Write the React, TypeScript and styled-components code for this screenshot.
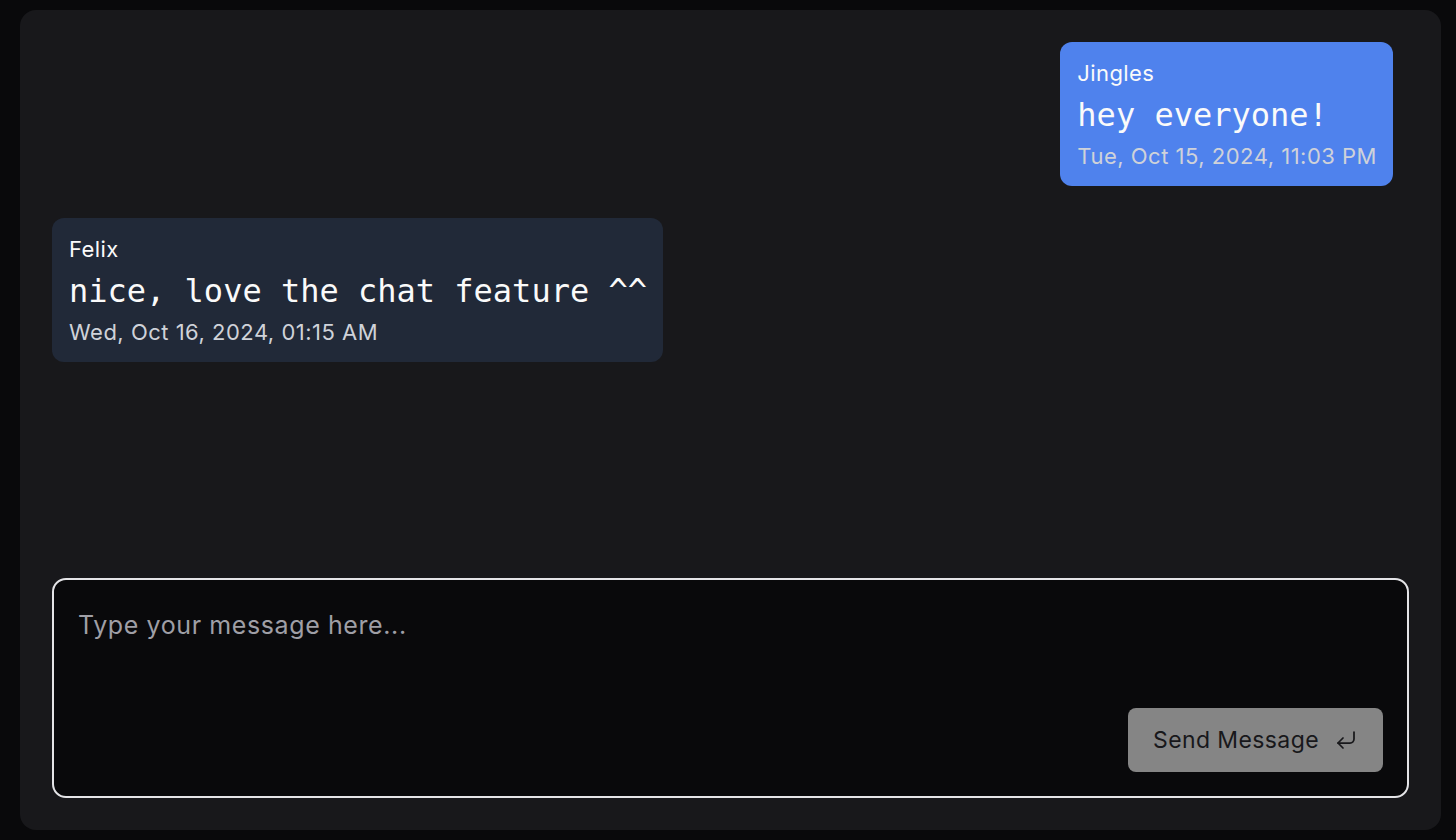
import React from 'react';
import styled, { createGlobalStyle } from 'styled-components';
import { CornerDownLeft } from 'lucide-react';

const GlobalStyle = createGlobalStyle`
  html, body {
    margin: 0;
    padding: 0;
    background-color: #09090b;
    font-family: Inter, "Noto Sans", "Liberation Sans", sans-serif;
  }
  * {
    box-sizing: border-box;
  }
`;

const Page = styled.div`
  height: 840px;
  padding: 10px 15px 10px 20px;
  display: flex;
`;

const Panel = styled.div`
  flex: 1;
  display: flex;
  flex-direction: column;
  background-color: #18181b;
  border-radius: 16px;
  padding: 32px;
  gap: 32px;
`;

const MessageList = styled.div`
  flex: 1;
  display: flex;
  flex-direction: column;
  gap: 32px;
  padding-right: 16px;
`;

const Bubble = styled.div<{ $mine?: boolean }>`
  align-self: ${(p) => (p.$mine ? 'flex-end' : 'flex-start')};
  background-color: ${(p) => (p.$mine ? '#4f82ed' : '#212938')};
  border-radius: 12px;
  padding: 16px 16px 16px 17px;
  display: flex;
  flex-direction: column;
  gap: 3px;
  color: #fafafa;
`;

const Author = styled.div`
  font-size: 22px;
  line-height: 30px;
  letter-spacing: 0.4px;
`;

const Text = styled.div`
  font-family: "DejaVu Sans Mono", "Liberation Mono", monospace;
  font-size: 32px;
  line-height: 48px;
`;

const Time = styled.div`
  font-size: 22px;
  line-height: 28px;
  letter-spacing: 0.5px;
  color: #cfd2d9;
`;

const Composer = styled.div`
  height: 220px;
  border: 2px solid #e4e4e7;
  border-radius: 14px;
  background-color: #09090b;
  display: flex;
  flex-direction: column;
  padding: 24px;
`;

const Input = styled.textarea`
  flex: 1;
  background: transparent;
  border: none;
  outline: none;
  resize: none;
  padding: 0;
  margin-top: 1px;
  font-family: inherit;
  font-size: 25px;
  line-height: 40px;
  letter-spacing: 0.6px;
  color: #fafafa;
  &::placeholder {
    color: #9f9fa6;
  }
`;

const Actions = styled.div`
  display: flex;
  justify-content: flex-end;
`;

const SendButton = styled.button`
  height: 64px;
  padding: 0 25px;
  display: flex;
  align-items: center;
  gap: 15px;
  background-color: #858585;
  color: #18181b;
  border: none;
  border-radius: 8px;
  font-family: inherit;
  font-size: 23px;
  letter-spacing: 0.4px;
  cursor: pointer;
`;

interface Message {
  author: string;
  text: string;
  time: string;
  mine?: boolean;
}

const messages: Message[] = [
  { author: 'Jingles', text: 'hey everyone!', time: 'Tue, Oct 15, 2024, 11:03 PM', mine: true },
  { author: 'Felix', text: 'nice, love the chat feature ^^', time: 'Wed, Oct 16, 2024, 01:15 AM' },
];

const App: React.FC = () => {
  return (
    <>
      <GlobalStyle />
      <Page>
        <Panel>
          <MessageList>
            {messages.map((m, i) => (
              <Bubble key={i} $mine={m.mine}>
                <Author>{m.author}</Author>
                <Text>{m.text}</Text>
                <Time>{m.time}</Time>
              </Bubble>
            ))}
          </MessageList>
          <Composer>
            <Input placeholder="Type your message here..." />
            <Actions>
              <SendButton>
                Send Message
                <CornerDownLeft size={24} strokeWidth={1.75} />
              </SendButton>
            </Actions>
          </Composer>
        </Panel>
      </Page>
    </>
  );
};

export default App;
